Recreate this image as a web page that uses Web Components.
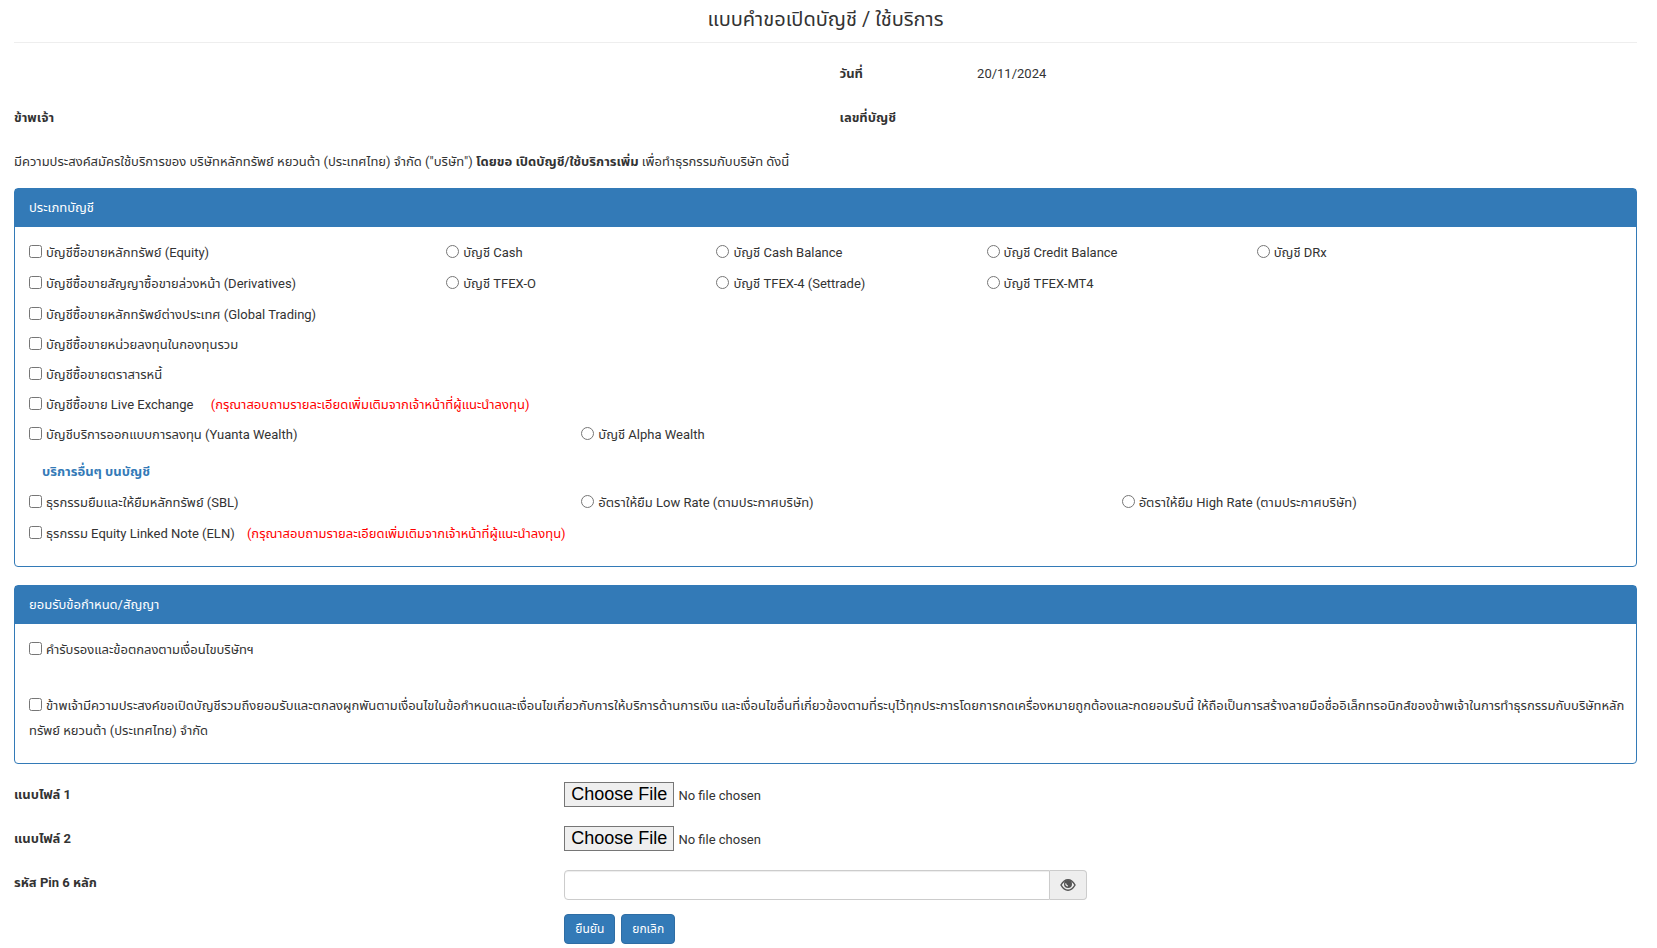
<!DOCTYPE html>
<html lang="th">
<head>
<meta charset="utf-8">
<meta name="viewport" content="width=device-width, initial-scale=1">
<title>แบบคำขอเปิดบัญชี / ใช้บริการ</title>
<style>
  :root {
    --primary: #337ab7;
    --primary-dark: #2e6da4;
    --danger: #ff0000;
    --text: #333;
    --line: #eee;
  }

  body {
    margin: 0;
    background: #fff;
    color: var(--text);
    font-family: Roboto, "Noto Sans Thai", "Noto Sans", sans-serif;
    font-size: 13px;
    line-height: 25px;
  }
</style>
</head>
<body>
<account-form></account-form>

<script>
// 12 column row, children take their width from the span attribute
class GridRow extends HTMLElement {
  connectedCallback() {
    this.attachShadow({ mode: "open" });
    this.shadowRoot.innerHTML = `
      <style>
        :host {
          display: grid;
          grid-template-columns: repeat(12, minmax(0, 1fr));
          align-items: start;
        }
        ::slotted(*) {
          box-sizing: border-box;
          min-width: 0;
          padding: 0 14px;
        }
        ::slotted([span="1"]) { grid-column-end: span 1; }
        ::slotted([span="2"]) { grid-column-end: span 2; }
        ::slotted([span="3"]) { grid-column-end: span 3; }
        ::slotted([span="4"]) { grid-column-end: span 4; }
        ::slotted([span="6"]) { grid-column-end: span 6; }
        ::slotted([span="12"]) { grid-column-end: span 12; }
        ::slotted([start="7"]) { grid-column-start: 7; }
        ::slotted([start="5"]) { grid-column-start: 5; }
      </style>
      <slot></slot>
    `;
  }
}

class FormPanel extends HTMLElement {
  connectedCallback() {
    this.attachShadow({ mode: "open" });
    this.shadowRoot.innerHTML = `
      <style>
        :host {
          display: block;
          margin-bottom: 18px;
          border: 1px solid var(--primary);
          border-radius: 4px;
        }
        h2 {
          margin: 0;
          padding: 6px 14px 7px;
          background: var(--primary);
          color: #fff;
          font-size: 13px;
          font-weight: 400;
          line-height: 25px;
        }
        .body {
          padding: 13px 0 15px;
        }
      </style>
      <h2></h2>
      <div class="body"><slot></slot></div>
    `;
    this.shadowRoot.querySelector("h2").textContent = this.getAttribute("heading");
  }
}

class ChoiceItem extends HTMLElement {
  connectedCallback() {
    const type = this.getAttribute("type") || "checkbox";
    this.attachShadow({ mode: "open" });
    this.shadowRoot.innerHTML = `
      <style>
        :host {
          display: block;
          margin-bottom: 5px;
        }
        :host([type="radio"]) {
          margin-bottom: 6px;
        }
        :host([type="radio"]) label {
          margin-left: 12px;
        }
        input {
          width: 13px;
          height: 13px;
          margin: 0 4px 0 0;
          vertical-align: -1px;
        }
      </style>
      <label><input type="${type}"><slot></slot></label>
    `;

    // radios sit in separate shadow roots, so the group is kept by hand
    const input = this.shadowRoot.querySelector("input");
    input.addEventListener("change", () => {
      const name = this.getAttribute("name");
      if (type !== "radio" || !name) return;
      this.getRootNode().querySelectorAll(`choice-item[name="${name}"]`).forEach(item => {
        if (item !== this) item.shadowRoot.querySelector("input").checked = false;
      });
    });
  }
}

class FileField extends HTMLElement {
  connectedCallback() {
    this.attachShadow({ mode: "open" });
    this.shadowRoot.innerHTML = `
      <style>
        :host {
          display: block;
          margin-bottom: 14px;
        }
        grid-row {
          min-height: 30px;
        }
        label {
          font-weight: 700;
        }
        input {
          display: block;
          max-width: 100%;
          font: inherit;
          color: inherit;
        }
        input::file-selector-button {
          margin: 0 4px 0 0;
          padding: 1px 6px;
          border: 1px solid #767676;
          border-radius: 0;
          background: #efefef;
          color: #000;
          font: 18px/21px "Liberation Sans", Arial, sans-serif;
        }
      </style>
      <grid-row>
        <div span="4"><label for="file"></label></div>
        <div span="4"><input type="file" id="file"></div>
      </grid-row>
    `;
    this.shadowRoot.querySelector("label").textContent = this.getAttribute("label");
  }
}

class PinField extends HTMLElement {
  connectedCallback() {
    this.attachShadow({ mode: "open" });
    this.shadowRoot.innerHTML = `
      <style>
        :host {
          display: block;
          margin-bottom: 14px;
        }
        label {
          font-weight: 700;
        }
        .group {
          display: flex;
          height: 30px;
        }
        input {
          flex: 1;
          min-width: 0;
          box-sizing: border-box;
          padding: 4px 12px;
          border: 1px solid #ccc;
          border-radius: 4px 0 0 4px;
          box-shadow: inset 0 1px 1px rgba(0, 0, 0, 0.075);
          font: inherit;
          color: #555;
        }
        button {
          display: flex;
          align-items: center;
          justify-content: center;
          width: 37px;
          box-sizing: border-box;
          padding: 0;
          border: 1px solid #ccc;
          border-left: 0;
          border-radius: 0 4px 4px 0;
          background: #eee;
          color: #555;
          cursor: pointer;
        }
      </style>
      <grid-row>
        <div span="4"><label for="pin">รหัส Pin 6 หลัก</label></div>
        <div span="4">
          <div class="group">
            <input type="password" id="pin" maxlength="6" inputmode="numeric">
            <button type="button" aria-label="Pin">
              <svg width="16" height="14" viewBox="0 0 16 14" aria-hidden="true">
                <path d="M1 7C3 3.4 5.3 1.8 8 1.8S13 3.4 15 7C13 10.6 10.7 12.2 8 12.2S3 10.6 1 7Z" fill="none" stroke="currentColor" stroke-width="1.5"/>
                <circle cx="8" cy="6" r="4" fill="currentColor"/>
                <path d="M5.8 5.4A2.4 2.4 0 0 0 8 8" fill="none" stroke="#eee" stroke-width="1.2"/>
              </svg>
            </button>
          </div>
        </div>
      </grid-row>
    `;

    const input = this.shadowRoot.querySelector("input");
    this.shadowRoot.querySelector("button").addEventListener("click", () => {
      input.type = input.type === "password" ? "text" : "password";
    });
  }
}

class PrimaryButton extends HTMLElement {
  connectedCallback() {
    this.attachShadow({ mode: "open" });
    this.shadowRoot.innerHTML = `
      <style>
        :host {
          display: inline-block;
        }
        button {
          display: block;
          height: 30px;
          padding: 0 10px;
          border: 1px solid var(--primary-dark);
          border-radius: 4px;
          background: var(--primary);
          color: #fff;
          font: inherit;
          font-size: 12px;
          line-height: 20px;
          cursor: pointer;
        }
        button:hover {
          background: #286090;
        }
      </style>
      <button type="button"><slot></slot></button>
    `;
  }
}

class AccountForm extends HTMLElement {
  connectedCallback() {
    this.attachShadow({ mode: "open" });
    this.shadowRoot.innerHTML = `
      <style>
        :host {
          display: block;
          padding: 4px 20px 5px 14px;
        }
        h1 {
          margin: 0 0 18px;
          padding-bottom: 8px;
          border-bottom: 1px solid var(--line);
          font-size: 20px;
          font-weight: 400;
          line-height: 30px;
          text-align: center;
        }
        .wide {
          margin-left: -14px;
          margin-right: -14px;
        }
        .info {
          margin-bottom: 19px;
        }
        p {
          margin: 0 0 14px;
        }
        .sub {
          margin: 6px 0;
          padding: 0 27px;
          color: var(--primary);
          font-size: 13px;
          font-weight: 700;
          line-height: 25px;
        }
        .note {
          color: var(--danger);
          margin-left: 14px;
        }
        .near {
          margin-left: 9px;
        }
        .gap {
          margin-bottom: 31px;
        }
        .terms {
          padding-right: 7px;
        }
        .actions {
          display: flex;
          gap: 6px;
        }
      </style>

      <h1>แบบคำขอเปิดบัญชี / ใช้บริการ</h1>

      <grid-row class="wide info">
        <b span="1" start="7">วันที่</b>
        <span span="4">20/11/2024</span>
      </grid-row>
      <grid-row class="wide info">
        <b span="6">ข้าพเจ้า</b>
        <b span="6">เลขที่บัญชี</b>
      </grid-row>
      <p>มีความประสงค์สมัครใช้บริการของ บริษัทหลักทรัพย์ หยวนต้า (ประเทศไทย) จำกัด ("บริษัท") <b>โดยขอ เปิดบัญชี/ใช้บริการเพิ่ม</b> เพื่อทำธุรกรรมกับบริษัท ดังนี้</p>

      <form-panel heading="ประเภทบัญชี">
        <grid-row>
          <choice-item span="3">บัญชีซื้อขายหลักทรัพย์ (Equity)</choice-item>
          <choice-item span="2" type="radio" name="equity">บัญชี Cash</choice-item>
          <choice-item span="2" type="radio" name="equity">บัญชี Cash Balance</choice-item>
          <choice-item span="2" type="radio" name="equity">บัญชี Credit Balance</choice-item>
          <choice-item span="2" type="radio" name="equity">บัญชี DRx</choice-item>
        </grid-row>
        <grid-row>
          <choice-item span="3">บัญชีซื้อขายสัญญาซื้อขายล่วงหน้า (Derivatives)</choice-item>
          <choice-item span="2" type="radio" name="tfex">บัญชี TFEX-O</choice-item>
          <choice-item span="2" type="radio" name="tfex">บัญชี TFEX-4 (Settrade)</choice-item>
          <choice-item span="2" type="radio" name="tfex">บัญชี TFEX-MT4</choice-item>
        </grid-row>
        <grid-row>
          <choice-item span="12">บัญชีซื้อขายหลักทรัพย์ต่างประเทศ (Global Trading)</choice-item>
          <choice-item span="12">บัญชีซื้อขายหน่วยลงทุนในกองทุนรวม</choice-item>
          <choice-item span="12">บัญชีซื้อขายตราสารหนี้</choice-item>
          <choice-item span="12">บัญชีซื้อขาย Live Exchange <span class="note">(กรุณาสอบถามรายละเอียดเพิ่มเติมจากเจ้าหน้าที่ผู้แนะนำลงทุน)</span></choice-item>
        </grid-row>
        <grid-row>
          <choice-item span="4">บัญชีบริการออกแบบการลงทุน (Yuanta Wealth)</choice-item>
          <choice-item span="4" type="radio" name="wealth">บัญชี Alpha Wealth</choice-item>
        </grid-row>
        <h3 class="sub">บริการอื่นๆ บนบัญชี</h3>
        <grid-row>
          <choice-item span="4">ธุรกรรมยืมและให้ยืมหลักทรัพย์ (SBL)</choice-item>
          <choice-item span="4" type="radio" name="sbl">อัตราให้ยืม Low Rate (ตามประกาศบริษัท)</choice-item>
          <choice-item span="4" type="radio" name="sbl">อัตราให้ยืม High Rate (ตามประกาศบริษัท)</choice-item>
          <choice-item span="12">ธุรกรรม Equity Linked Note (ELN) <span class="note near">(กรุณาสอบถามรายละเอียดเพิ่มเติมจากเจ้าหน้าที่ผู้แนะนำลงทุน)</span></choice-item>
        </grid-row>
      </form-panel>

      <form-panel heading="ยอมรับข้อกำหนด/สัญญา">
        <grid-row>
          <choice-item span="12" class="gap">คำรับรองและข้อตกลงตามเงื่อนไขบริษัทฯ</choice-item>
          <choice-item span="12" class="terms">ข้าพเจ้ามีความประสงค์ขอเปิดบัญชีรวมถึงยอมรับและตกลงผูกพันตามเงื่อนไขในข้อกำหนดและเงื่อนไขเกี่ยวกับการให้บริการด้านการเงิน และเงื่อนไขอื่นที่เกี่ยวข้องตามที่ระบุไว้ทุกประการโดยการกดเครื่องหมายถูกต้องและกดยอมรับนี้ ให้ถือเป็นการสร้างลายมือชื่ออิเล็กทรอนิกส์ของข้าพเจ้าในการทำธุรกรรมกับบริษัทหลัก<wbr>ทรัพย์ หยวนต้า (ประเทศไทย) จำกัด</choice-item>
        </grid-row>
      </form-panel>

      <file-field class="wide" label="แนบไฟล์ 1"></file-field>
      <file-field class="wide" label="แนบไฟล์ 2"></file-field>
      <pin-field class="wide"></pin-field>
      <grid-row class="wide">
        <div span="4" start="5">
          <div class="actions">
            <primary-button>ยืนยัน</primary-button>
            <primary-button>ยกเลิก</primary-button>
          </div>
        </div>
      </grid-row>
    `;
  }
}

customElements.define("grid-row", GridRow);
customElements.define("form-panel", FormPanel);
customElements.define("choice-item", ChoiceItem);
customElements.define("file-field", FileField);
customElements.define("pin-field", PinField);
customElements.define("primary-button", PrimaryButton);
customElements.define("account-form", AccountForm);
</script>
</body>
</html>
